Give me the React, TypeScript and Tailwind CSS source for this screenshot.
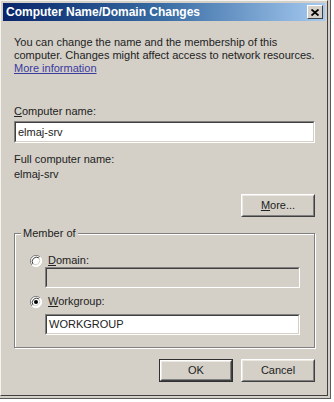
import React from "react";

const font = { fontFamily: '"Liberation Sans", Arial, sans-serif' };

function Radio({ checked }: { checked?: boolean }) {
  return (
    <svg width="12" height="12" viewBox="0 0 12 12" className="shrink-0">
      <circle cx="6" cy="6" r="5.5" fill="#ffffff" />
      <path d="M10 2 A5.5 5.5 0 0 0 2 10" stroke="#808080" strokeWidth="1" fill="none" />
      <path d="M2 10 A5.5 5.5 0 0 0 10 2" stroke="#ffffff" strokeWidth="1" fill="none" />
      <path d="M9 3 A4.3 4.3 0 0 0 3 9" stroke="#404040" strokeWidth="1" fill="none" />
      <path d="M3 9 A4.3 4.3 0 0 0 9 3" stroke="#d4d0c8" strokeWidth="1" fill="none" />
      {checked && <circle cx="6" cy="6" r="2" fill="#000000" />}
    </svg>
  );
}

function Button({ children, isDefault }: { children: React.ReactNode; isDefault?: boolean }) {
  const inner = (
    <div className="w-full h-full border border-t-white border-l-white border-r-[#404040] border-b-[#404040]">
      <div className="w-full h-full border border-t-[#ece9e2] border-l-[#ece9e2] border-r-[#808080] border-b-[#808080] flex items-center justify-center text-[11px] text-[#222]">
        {children}
      </div>
    </div>
  );
  return isDefault ? (
    <div className="w-[74px] h-[23px] border border-[#303030]">{inner}</div>
  ) : (
    <div className="w-[74px] h-[23px]">{inner}</div>
  );
}

function Input({ value, disabled, h }: { value?: string; disabled?: boolean; h: string }) {
  return (
    <div className={`${h} w-full border border-t-[#808080] border-l-[#808080] border-r-white border-b-white`}>
      <div
        className={`w-full h-full border border-t-[#404040] border-l-[#404040] border-r-[#d4d0c8] border-b-[#d4d0c8] flex items-center pl-[2px] text-[11px] text-[#222] ${
          disabled ? "bg-[#d4d0c8]" : "bg-white"
        }`}
      >
        {value}
      </div>
    </div>
  );
}

export default function App() {
  return (
    <div className="w-[334px] h-[402px] bg-white" style={font}>
      <div className="w-[331px] h-[399px] border-r border-b border-[#5a5a5a] bg-[#d4d0c8]">
        <div className="w-[328px] h-[396px] border border-t-[#f4f3ef] border-l-[#f4f3ef] border-r-[#404040] border-b-[#404040] bg-[#d4d0c8] p-[2px] flex flex-col">
          {/* Title bar */}
          <div className="h-[18px] flex items-center justify-between bg-gradient-to-r from-[#0a246a] via-[#3a6ea5] to-[#a6caf0] pl-[3px] pr-[2px]">
            <span className="text-white font-bold text-[12px] leading-none">Computer Name/Domain Changes</span>
            <div className="w-[16px] h-[14px] border border-t-white border-l-white border-r-[#404040] border-b-[#404040] bg-[#d4d0c8] flex items-center justify-center">
              <svg width="8" height="7" viewBox="0 0 8 7">
                <path d="M0.5 0.5 L7.5 6.5 M7.5 0.5 L0.5 6.5" stroke="#000" strokeWidth="1.8" />
              </svg>
            </div>
          </div>

          {/* Body */}
          <div className="flex flex-col pl-[11px] pr-[10px] text-[11px] text-[#222]">
            <p className="mt-[15px] leading-[13px]">
              You can change the name and the membership of this computer. Changes might affect access to network
              resources.{" "}
              <br />
              <span className="text-[#3a3aa0] underline">More information</span>
            </p>

            <div className="mt-[30px] leading-[13px]">
              <span className="underline">C</span>omputer name:
            </div>
            <div className="mt-[3px]">
              <Input value="elmaj-srv" h="h-[22px]" />
            </div>

            <div className="mt-[10px] leading-[13px]">Full computer name:</div>
            <div className="mt-[2px] leading-[13px]">elmaj-srv</div>

            <div className="mt-[13px] self-end">
              <Button>
                <span>
                  <span className="underline">M</span>ore...
                </span>
              </Button>
            </div>

            {/* Group box */}
            <div className="relative mt-[16px] border border-[#808080] shadow-[1px_1px_0_#fff,inset_1px_1px_0_#fff] pt-[20px] pb-[12px] pl-[15px] pr-[14px]">
              <span className="absolute -top-[7px] left-[6px] px-[2px] bg-[#d4d0c8] leading-[13px]">Member of</span>
              <div className="flex items-center gap-[6px] h-[13px]">
                <Radio />
                <span>
                  <span className="underline">D</span>omain:
                </span>
              </div>
              <div className="pl-[15px]">
                <Input disabled h="h-[21px]" />
              </div>
              <div className="mt-[7px] flex items-center gap-[6px] h-[13px]">
                <Radio checked />
                <span>
                  <span className="underline">W</span>orkgroup:
                </span>
              </div>
              <div className="pl-[15px] mt-[6px]">
                <Input value="WORKGROUP" h="h-[21px]" />
              </div>
            </div>

            <div className="mt-[11px] flex justify-end gap-[8px]">
              <Button isDefault>OK</Button>
              <Button>Cancel</Button>
            </div>
          </div>
        </div>
      </div>
    </div>
  );
}
